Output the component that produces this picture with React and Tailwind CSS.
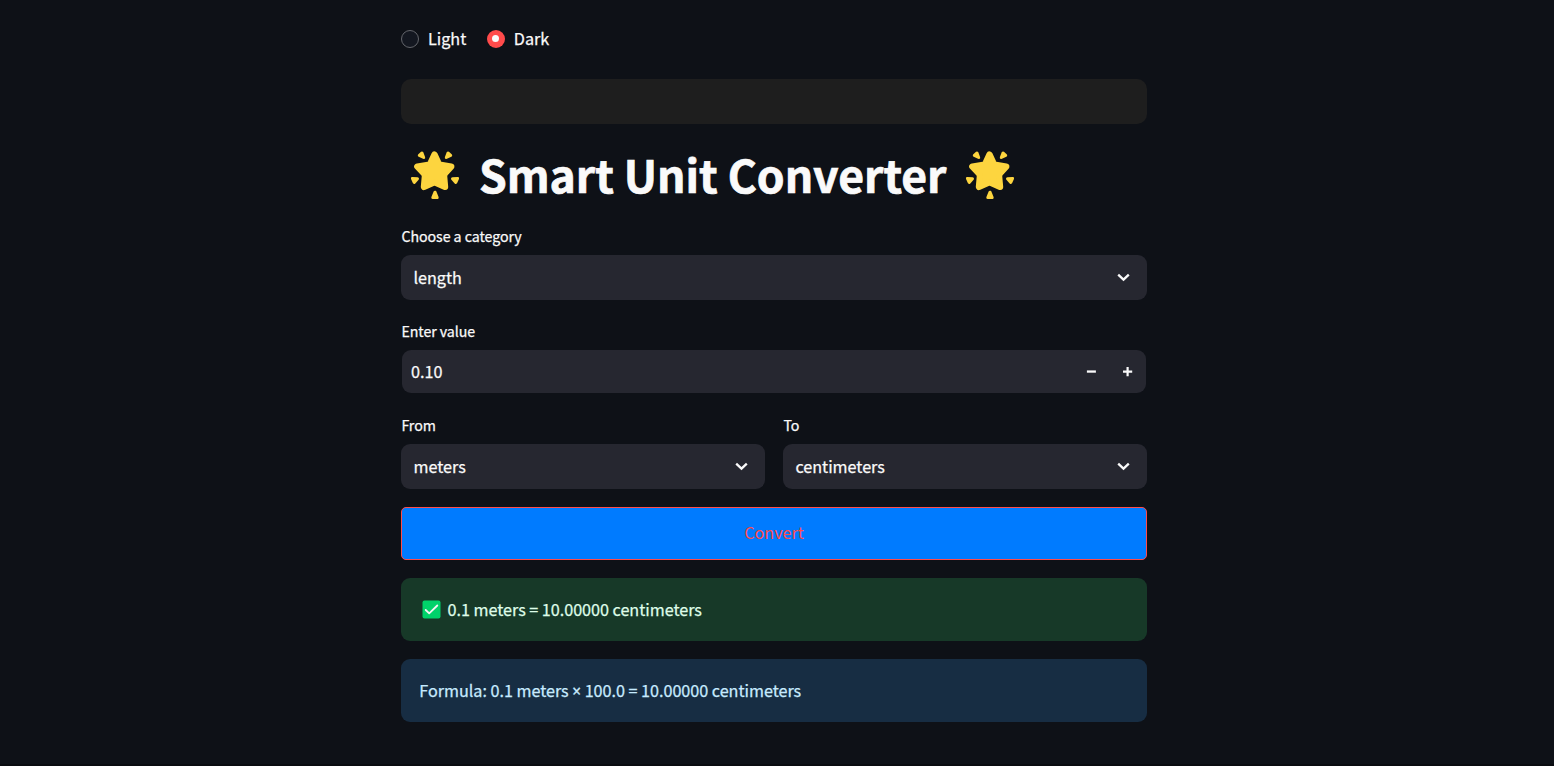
import React from "react";

function GlowingStar() {
  return (
    <svg viewBox="0 0 50 50" className="block h-[50px] w-[50px] shrink-0" fill="#fdd53f" stroke="#fdd53f" strokeLinejoin="round">
      <path strokeWidth="6.4" d="M24.5 4.6 L28.2 12.6 Q29.2 14.6 31 14.9 L41.2 16.6 L35 23.4 Q33.9 24.8 34.1 26.8 L35 36.9 L26.6 33 Q24.5 32.1 22.4 33 L14 36.9 L14.9 26.8 Q15.1 24.8 14 23.4 L7.4 16.6 L18 14.9 Q19.8 14.6 20.8 12.6 Z" />
      <g strokeWidth="3">
        <path d="M9.3 5.3 L12 3 L13.7 7.5 Z" />
        <path d="M40.7 5.3 L38 3 L36.3 7.5 Z" />
        <path d="M2.4 28.4 L7.5 28.7 L4.2 32.4 Z" />
        <path d="M47.6 28.4 L42.5 28.7 L45.8 32.4 Z" />
        <path d="M25 42.2 L27.2 47.5 L22.8 47.5 Z" />
      </g>
    </svg>
  );
}

function Chevron() {
  return (
    <svg viewBox="0 0 18 18" className="h-[18px] w-[18px]" fill="none" stroke="#fafafa" strokeWidth="2.3">
      <path d="M4.2 5.7 L9.5 10.7 L14.8 5.7" />
    </svg>
  );
}

function Label({ children }) {
  return (
    <div className="h-[18px] pl-[0.4px] text-[14.2px] leading-[16px] tracking-[-0.05px] [-webkit-text-stroke:0.25px]">{children}</div>
  );
}

function Select({ value }) {
  return (
    <div className="flex h-[45px] items-center justify-between rounded-[9px] bg-[#262730] pr-[15px] pl-[12.5px]">
      <span className="pb-[2px] tracking-[-0.03px]">{value}</span>
      <Chevron />
    </div>
  );
}

export default function App() {
  return (
    <div className="flex h-[766px] flex-col overflow-hidden border-b-2 border-[#0a0c10] bg-[#0e1117] font-['Noto_Sans_CJK_JP','Noto_Sans_CJK_SC',sans-serif] text-[16.2px] leading-[26px] text-[#fafafa] [-webkit-text-stroke:0.25px]">
      <main className="ml-[401px] w-[746px]">
        <div className="flex h-[79px] items-center pb-[2px]">
          <div className="flex items-center gap-[9px]">
            <span className="h-[18px] w-[18px] rounded-full border border-[#63656b] bg-[#131720]" />
            <span className="pb-[2px]">Light</span>
          </div>
          <div className="ml-[20.5px] flex items-center gap-[9px]">
            <span className="flex h-[18px] w-[18px] items-center justify-center rounded-full bg-[#ff4b4b]">
              <span className="h-[7px] w-[7px] rounded-full bg-[#fafafa]" />
            </span>
            <span className="pb-[2px]">Dark</span>
          </div>
        </div>

        <div className="h-[45px] rounded-[10px] bg-[#1e1e1e]" />

        <h1 className="flex h-[104px] items-center pb-[2px] pl-[9px] text-[44.5px] leading-[60px] font-bold [-webkit-text-stroke:0.7px]">
          <GlowingStar />
          <span className="ml-[19px] w-[467px] pb-[2px] tracking-[-0.06px] whitespace-nowrap">Smart Unit Converter</span>
          <span className="ml-[19px]">
            <GlowingStar />
          </span>
        </h1>

        <Label>Choose a category</Label>
        <div className="mt-[9px]">
          <Select value="length" />
        </div>

        <div className="mt-[23px]">
          <Label>Enter value</Label>
        </div>
        <div className="mx-px mt-[9px] flex h-[43px] items-center rounded-[9px] bg-[#262730] pl-[9px]">
          <span className="flex-1 pb-[2px]">0.10</span>
          <span className="flex w-[36px] justify-center">
            <svg viewBox="0 0 10 10" className="h-[10px] w-[10px]" fill="#fafafa">
              <path d="M0.9 3.4h9v2.3h-9z" />
            </svg>
          </span>
          <span className="flex w-[37px] justify-center">
            <svg viewBox="0 0 10 10" className="h-[10px] w-[10px]" fill="#fafafa">
              <path d="M3.5 0h2.2v3.4h3.5v2.3h-3.5v3.5h-2.2v-3.5h-3.5v-2.3h3.5z" />
            </svg>
          </span>
        </div>

        <div className="mt-[24px] grid grid-cols-2 gap-[18px]">
          <div>
            <Label>From</Label>
            <div className="mt-[9px]">
              <Select value="meters" />
            </div>
          </div>
          <div>
            <Label>To</Label>
            <div className="mt-[9px]">
              <Select value="centimeters" />
            </div>
          </div>
        </div>

        <button className="mt-[18px] flex h-[53px] w-full items-center justify-center rounded-[5px] border border-[#ff4b4b] bg-[#007bff] pb-[3px] text-[#ff4b4b] [-webkit-text-stroke:0px]">
          Convert
        </button>

        <div className="mt-[18px] flex h-[63px] items-center rounded-[9px] bg-[#173928] pl-[21px] text-[#dffde9]">
          <svg viewBox="0 0 19 19" className="mr-[6.5px] h-[19px] w-[19px] shrink-0">
            <rect x="0.5" y="0.5" width="18" height="18" rx="2" fill="#00d26a" />
            <path d="M3.7 10 L7.2 13.4 L15.3 5.5" fill="none" stroke="#f4f4f4" strokeWidth="1.8" strokeLinecap="round" strokeLinejoin="round" />
          </svg>
          <span className="pb-[2px] tracking-[-0.03px]">0.1 meters = 10.00000 centimeters</span>
        </div>

        <div className="mt-[18px] flex h-[63px] items-center rounded-[9px] bg-[#172d43] pl-[18.3px] text-[#c7ebff]">
          <span className="pb-[2px] tracking-[-0.03px]">
            Formula: 0.1 meters <span className="font-['Noto_Sans',sans-serif] text-[15.4px] leading-[16px]">×</span> 100.0 = 10.00000 centimeters
          </span>
        </div>
      </main>
    </div>
  );
}
